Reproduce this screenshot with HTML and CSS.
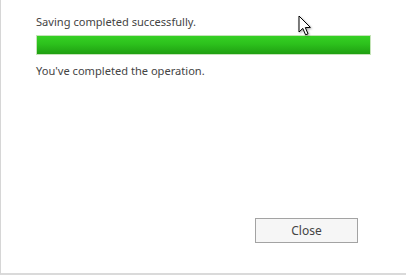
FILE: index.html
```html
<!DOCTYPE html>
<html>
  <head>
    <title>Saving</title>
    <link rel="stylesheet" href="styles.css">
  </head>
  <body>
    <article class="dialog">
      <div class="content">
        <p class="status">Saving completed successfully.</p>
        <div class="progress">
          <div class="progress-bar" style="width: 100%"></div>
        </div>
        <p class="message">You've completed the operation.</p>
      </div>
      <div class="actions">
        <button class="close">Close</button>
      </div>
      <svg class="cursor" width="14" height="22" viewBox="0 0 14 22">
        <path d="M1 1 L1 17 L4.8 13.4 L7.6 19.8 L10 18.8 L7.3 12.6 L12.4 12.4 Z" fill="#fff" stroke="#000" stroke-width="1" stroke-linejoin="miter" />
      </svg>
    </article>
  </body>
</html>
```

FILE: styles.css
```css
* {
  box-sizing: border-box;
}

body {
  margin: 0;
  font-family: "Segoe UI", "Noto Sans", sans-serif;
  font-size: 11.1px;
  color: #444;
  background: #fff;
}

.dialog {
  position: relative;
  display: flex;
  flex-direction: column;
  justify-content: space-between;
  width: 406px;
  height: 275px;
  border-left: 1px solid #d6d6d6;
  border-bottom: 2px solid #dadada;
  padding: 13px 0 30px 35px;
}

.content {
  width: 335px;
}

.status {
  margin: 0 0 5px 0;
  line-height: 17px;
}

.progress {
  height: 20px;
  border: 1px solid #c4e4b8;
  background: #e8e8e8;
}

.progress-bar {
  height: 100%;
  background: linear-gradient(to bottom, #36d024 0%, #2cc11c 45%, #1f9f12 100%);
}

.message {
  margin: 7px 0 0 0;
  line-height: 17px;
}

.actions {
  display: flex;
  justify-content: flex-end;
  padding-right: 48px;
}

button.close {
  width: 103px;
  height: 25px;
  border: 1px solid #a3a3a3;
  border-radius: 0;
  background: #f6f6f6;
  font-family: inherit;
  font-size: 12px;
  color: #444;
  padding: 0;
}

.cursor {
  position: absolute;
  left: 297px;
  top: 15px;
  filter: drop-shadow(1px 1px 1px rgba(0, 0, 0, 0.35));
}
```
